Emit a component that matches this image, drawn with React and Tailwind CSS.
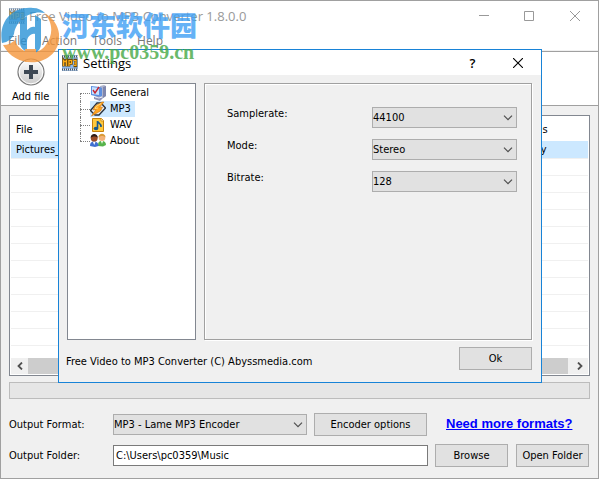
import React from "react";

const TREE_ITEMS = [
  { name: "General", Icon: GeneralIcon },
  { name: "MP3", Icon: WinampIcon, selected: true },
  { name: "WAV", Icon: WavIcon },
  { name: "About", Icon: PeopleIcon },
];

const SETTINGS = [
  { id: "samplerate", label: "Samplerate:", value: "44100" },
  { id: "mode", label: "Mode:", value: "Stereo" },
  { id: "bitrate", label: "Bitrate:", value: "128" },
];

const EMPTY_ROWS = Array.from({ length: 11 }, (_, i) => i);

function Mp3Icon({ className = "" }) {
  return (
    <svg viewBox="0 0 16 16" className={`w-4 h-4 shrink-0 ${className}`} aria-hidden="true">
      <rect width="16" height="16" fill="#8db8ec" />
      <path d="M0 1.5h16M0 14.5h16" stroke="#4a5663" strokeWidth="2" />
      <path d="M1 1.5h15M1 14.5h15" stroke="#dfe8f2" strokeWidth="2" strokeDasharray="1 1" />
      <path
        d="M1.500 11.500V5l1.500 1.500L4.500 5v6.500M7 11.500V5h2.500v3.500H7M11.500 5H14v6h-2.500M12 8h2"
        fill="none"
        stroke="#6b4a08"
        strokeWidth="2.600"
      />
      <path
        d="M1.500 11V5.500L3 7l1.500-1.500V11M7 11V5.500h2.500v3H7M11.500 5.500H14v5h-2.500M12 8h2"
        fill="none"
        stroke="#ffae17"
        strokeWidth="1.200"
      />
    </svg>
  );
}

function GeneralIcon() {
  return (
    <svg viewBox="0 0 16 16" className="w-4 h-4 shrink-0" aria-hidden="true">
      <path d="M10 1l4-1 2 1v10l-3 2-3-1z" fill="#aeb3cc" />
      <path d="M13 2l3-1v10l-3 2z" fill="#7f86ad" />
      <path d="M1 1l9 1 2 1v8l-3 1-8-2z" fill="#5d8fe0" />
      <path d="M2 2l7 1v7L2 9z" fill="#c7e2ff" />
      <path d="M3 5l2 3 4-6" fill="none" stroke="#c42532" strokeWidth="1.4" />
      <path d="M4 12l4-1 5 2-3 3-6-2z" fill="#8f93b8" />
      <path d="M5 12l4 1 3-1" fill="none" stroke="#eceef8" />
    </svg>
  );
}

function WinampIcon() {
  return (
    <svg viewBox="0 0 16 16" className="w-4 h-4 shrink-0" aria-hidden="true">
      <path d="M7 2h4l4.500 5L9 14H5L.5 9.500z" fill="#e8edf3" stroke="#27313d" strokeWidth="1.3" />
      <path d="M12 1L5 5 3 9l3-.5L1.500 15l9-5 2-4-3 .5L14 1z" fill="#ffa51f" stroke="#c9720f" strokeWidth=".6" />
      <path d="M11 2.500L6 5.500 5 7.500l3-.5" fill="none" stroke="#ffd978" />
    </svg>
  );
}

function WavIcon() {
  return (
    <svg viewBox="0 0 16 16" className="w-4 h-4 shrink-0" aria-hidden="true">
      <path d="M2.500 1.500h9l2 2v11h-11z" fill="#ffc93c" stroke="#c47f0b" />
      <path d="M11 1.500v2.500h2.500" fill="#fff3c4" stroke="#c47f0b" strokeWidth=".7" />
      <path d="M7.500 11V4c0 2 4 2 3.500 6" fill="none" stroke="#17598f" strokeWidth="1.600" />
      <ellipse cx="6" cy="11.500" rx="2.300" ry="1.700" fill="#17598f" />
    </svg>
  );
}

function PeopleIcon() {
  return (
    <svg viewBox="0 0 16 16" className="w-4 h-4 shrink-0" aria-hidden="true">
      <path d="M8 13c0-4 1-5 4-5s4 2 4 4l-3 1.500z" fill="#57b34b" />
      <path d="M11 8h2l-1 3z" fill="#fff" />
      <circle cx="12" cy="4.800" r="3.300" fill="#f2b279" />
      <path d="M8.500 4.500c0-5 7-5 7 0C14 2.500 10 2.500 8.500 4.500z" fill="#d99a35" />
      <path d="M0 13c0-3 1-4.500 4-4.500S8.500 10 8.500 13L5 14z" fill="#3f6fd0" />
      <path d="M3 9h2.500L4.200 12z" fill="#fff" />
      <circle cx="4.200" cy="5.200" r="3.400" fill="#9a4b26" />
      <path d="M.6 5c0-5.500 7.200-5.500 7.200 0C6 3 2.500 3 .6 5z" fill="#2f1c17" />
    </svg>
  );
}

function AddIcon() {
  return (
    <svg viewBox="0 0 28 28" className="w-7 h-7" aria-hidden="true">
      <defs>
        <linearGradient id="addFill" x1="0" y1="0" x2="0" y2="1">
          <stop offset="0" stopColor="#fff" />
          <stop offset="1" stopColor="#c9c9c9" />
        </linearGradient>
      </defs>
      <circle cx="14" cy="14" r="13" fill="url(#addFill)" stroke="#777" strokeWidth="1.200" />
      <circle cx="14" cy="14" r="11.800" fill="none" stroke="#fff" />
      <path d="M14 7v14M7 14h14" stroke="#3d4854" strokeWidth="4" />
    </svg>
  );
}

function SelectBox({ id, value, className }) {
  return (
    <div className={`relative ${className}`}>
      <select
        id={id}
        defaultValue={value}
        className="block w-full h-[21px] appearance-none border border-[#adadad] bg-[#e1e1e1] pr-5 text-black outline-none"
      >
        <option>{value}</option>
      </select>
      <svg viewBox="0 0 10 6" className="absolute right-1 top-2 w-[10px] h-[6px] pointer-events-none" aria-hidden="true">
        <path d="M1 .7l4 4 4-4" fill="none" stroke="#505050" strokeWidth="1.200" />
      </svg>
    </div>
  );
}

function PushButton({ children, className }) {
  return (
    <button className={`h-[23px] border border-[#adadad] bg-[#e1e1e1] text-center whitespace-nowrap ${className}`}>
      {children}
    </button>
  );
}

function TitleBar() {
  return (
    <header className="flex items-center h-[30px] pl-2 text-[#999]">
      <Mp3Icon className="opacity-70" />
      <h1 className="ml-1 flex-1 font-['Open_Sans',sans-serif] text-[13px] whitespace-nowrap">
        Free Video to MP3 Converter 1.8.0.0
      </h1>
      <button aria-label="Minimize" className="w-[45px] h-full flex items-center justify-center">
        <svg viewBox="0 0 10 10" className="w-[10px] h-[10px]">
          <path d="M0 4.500h10" stroke="#999" />
        </svg>
      </button>
      <button aria-label="Maximize" className="w-[45px] h-full flex items-center justify-center">
        <svg viewBox="0 0 10 10" className="w-[10px] h-[10px]">
          <path d="M.5.500h9v9h-9z" fill="none" stroke="#999" />
        </svg>
      </button>
      <button aria-label="Close" className="w-[47px] h-full flex items-center justify-center">
        <svg viewBox="0 0 10 10" className="w-[10px] h-[10px]">
          <path d="M0 0l10 10M10 0L0 10" stroke="#999" />
        </svg>
      </button>
    </header>
  );
}

function FileList() {
  return (
    <div className="flex-1 flex flex-col border border-[#828790] bg-white p-px overflow-hidden">
      <div className="flex-1">
        <table className="w-full table-fixed border-collapse text-left">
          <thead>
            <tr className="h-6">
              <th className="px-[5px] pt-[2px] font-normal">File</th>
              <th className="w-[77px] px-[5px] pt-[2px] font-normal">Status</th>
            </tr>
          </thead>
          <tbody>
            <tr className="h-[17px] bg-[#cce8ff] border-b border-[#f0f0f0]">
              <td className="px-[5px] pt-[2px]">Pictures_</td>
              <td className="px-[5px] pt-[2px]">Ready</td>
            </tr>
            {EMPTY_ROWS.map((row) => (
              <tr key={row} className="h-[17px] border-b border-[#f0f0f0]">
                <td></td>
                <td></td>
              </tr>
            ))}
          </tbody>
        </table>
      </div>
      <div className="flex h-4 bg-[#f0f0f0]">
        <button aria-label="Scroll left" className="w-[17px] flex items-center justify-center">
          <svg viewBox="0 0 6 8" className="w-[6px] h-2">
            <path d="M5 .5L1.500 4 5 7.500" fill="none" stroke="#505050" strokeWidth="1.800" />
          </svg>
        </button>
        <div className="flex-1 mr-[3px] bg-[#cdcdcd]"></div>
        <button aria-label="Scroll right" className="w-[17px] flex items-center justify-center">
          <svg viewBox="0 0 6 8" className="w-[6px] h-2">
            <path d="M1 .5L4.500 4 1 7.500" fill="none" stroke="#505050" strokeWidth="1.800" />
          </svg>
        </button>
      </div>
    </div>
  );
}

function SettingsDialog() {
  return (
    <section
      role="dialog"
      aria-label="Settings"
      className="absolute left-[57px] top-[48px] w-[484px] border border-[#1883d7] bg-[#f0f0f0]"
    >
      <header className="flex items-center h-[25px] pl-[3px] bg-white">
        <Mp3Icon />
        <h2 className="ml-[5px] flex-1 font-['Open_Sans',sans-serif] text-[13px]">Settings</h2>
        <button aria-label="Help" className="w-[45px] font-['Open_Sans',sans-serif] text-[13px] font-semibold">
          ?
        </button>
        <button aria-label="Close" className="w-[46px] h-full flex items-center justify-center">
          <svg viewBox="0 0 10 10" className="w-[10px] h-[10px]">
            <path d="M0 0l10 10M10 0L0 10" stroke="#000" strokeWidth="1.100" />
          </svg>
        </button>
      </header>

      <div className="flex gap-2 pt-2 pl-2 pr-[9px]">
        <ul className="w-[129px] h-[257px] border border-[#828790] bg-white pl-3 pt-px">
          {TREE_ITEMS.map(({ name, Icon, selected }, i) => (
            <li key={name} className="flex h-4 items-center">
              <span className="flex flex-col w-[10px] h-4">
                <span className={`h-2 border-dotted border-[#808080] ${i === 0 ? "" : "border-l"}`}></span>
                <span
                  className={`h-2 border-t border-dotted border-[#808080] ${
                    i === TREE_ITEMS.length - 1 ? "" : "border-l"
                  }`}
                ></span>
              </span>
              <button className={`flex items-center h-4 pr-1 ${selected ? "bg-[#cce8ff]" : ""}`}>
                <Icon />
                <span className="ml-1">{name}</span>
              </button>
            </li>
          ))}
        </ul>

        <div className="flex-1 h-[257px] border border-[#a0a0a0] shadow-[inset_1px_1px_0_#fff,1px_1px_0_#fff] pl-[22px] pr-[14px] pt-[23px] flex flex-col gap-[11px]">
          {SETTINGS.map((s) => (
            <div key={s.id} className="flex items-start">
              <label htmlFor={s.id} className="flex-1 leading-[14px]">
                {s.label}
              </label>
              <SelectBox id={s.id} value={s.value} className="w-[145px]" />
            </div>
          ))}
        </div>
      </div>

      <footer className="flex items-start justify-between pt-[7px] pb-3 pl-[7px] pr-[9px]">
        <p className="pt-2 leading-[14px]">Free Video to MP3 Converter (C) Abyssmedia.com</p>
        <PushButton className="w-[73px]">Ok</PushButton>
      </footer>
    </section>
  );
}

function Watermark() {
  return (
    <div className="absolute left-0 top-[6px] flex pointer-events-none">
      <svg viewBox="0 0 58 56" className="w-[58px] h-14 opacity-80" aria-hidden="true">
        <path d="M1 36C-3 14 12-1 32 1c5 0 9 2 12 5C29 3 15 13 13 27c-2 5-6 8-12 9z" fill="#2a93d6" />
        <path d="M43 6c18 9 20 32 6 43-13 11-37 8-47-11 5 0 9-2 12-5 3 13 22 17 30 6C53 28 52 15 43 6z" fill="#f5963a" />
        <path d="M19 13l7-4v14c3-3 6-4 8-3V8l6 4v24c0 5-2 8-6 10V27c-4-1-8 3-8 8v10c-4-2-7-5-7-9z" fill="#2a93d6" />
        <path d="M24 42h11v13H24z" fill="#f5963a" />
      </svg>
      <div className="pl-[3px] pt-1 opacity-80">
        <p className="font-['Noto_Sans_CJK_SC',sans-serif] text-[27px] leading-[27px] font-black text-[#3fa0f5] whitespace-nowrap">
          河东软件园
        </p>
        <p className="pt-1 font-['Liberation_Serif',serif] text-[20px] leading-5 font-bold text-[#45a845]">
          www.pc0359.cn
        </p>
      </div>
    </div>
  );
}

export default function App() {
  return (
    <div className="relative min-h-screen flex flex-col border border-[#a0a0a0] bg-[#f0f0f0] font-['DejaVu_Sans_Condensed','DejaVu_Sans',sans-serif] text-[11px] leading-[14px] text-black">
      <div className="bg-white">
        <TitleBar />
        <nav className="flex h-5 items-center gap-[15px] pl-[7px] font-['Open_Sans',sans-serif] text-[12px] text-[#777] border-b border-[#f0f0f0]">
          <button>File</button>
          <button>Action</button>
          <button>Tools</button>
          <button>Help</button>
        </nav>
        <div className="border-y border-[#a0a0a0] h-[55px] pl-2 pt-[6px]">
          <button className="flex flex-col items-center gap-1 px-[3px]">
            <AddIcon />
            Add file
          </button>
        </div>
      </div>

      <main className="flex-1 flex flex-col px-2 pt-[9px] pb-[11px]">
        <FileList />
        <div role="progressbar" aria-label="Conversion" className="mt-[6px] h-[17px] border border-[#bcbcbc] bg-[#e6e6e6]"></div>

        <div className="mt-[14px] flex items-center">
          <label htmlFor="format" className="w-[104px]">
            Output Format:
          </label>
          <SelectBox id="format" value="MP3 - Lame MP3 Encoder" className="flex-1" />
          <PushButton className="ml-[7px] w-[113px]">Encoder options</PushButton>
          <div className="w-[163px] pl-[19px]">
            <a href="#" className="font-['Liberation_Sans',sans-serif] text-[13px] font-bold text-[#0000ff] underline whitespace-nowrap">
              Need more formats?
            </a>
          </div>
        </div>

        <div className="mt-2 flex items-center">
          <label htmlFor="folder" className="w-[104px]">
            Output Folder:
          </label>
          <input
            id="folder"
            defaultValue="C:\Users\pc0359\Music"
            className="flex-1 min-w-0 h-[21px] border border-[#7a7a7a] bg-white px-[2px] outline-none"
          />
          <PushButton className="ml-[7px] w-[73px]">Browse</PushButton>
          <PushButton className="ml-2 mr-px w-[73px]">Open Folder</PushButton>
        </div>
      </main>

      <SettingsDialog />
      <Watermark />
    </div>
  );
}
